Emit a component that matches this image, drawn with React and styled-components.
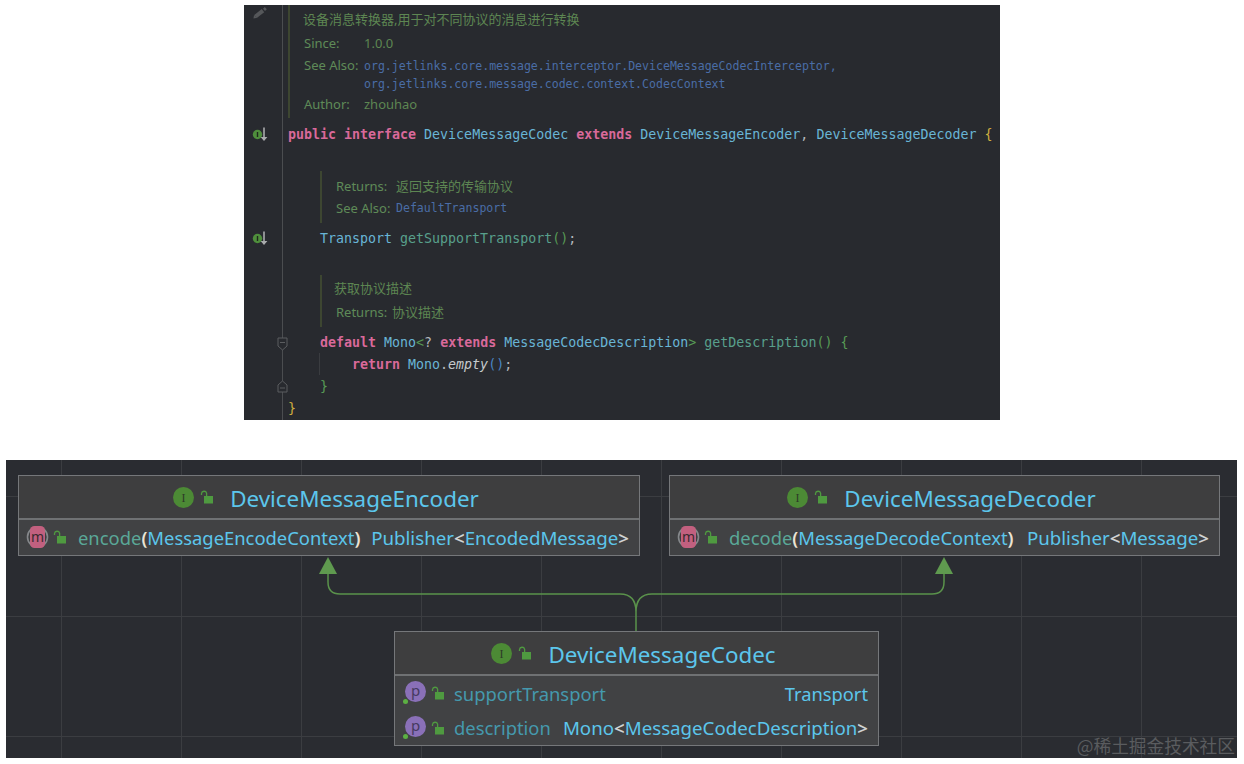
import React from "react";
import styled, { createGlobalStyle } from "styled-components";

const colors = {
  doc: "#5d8652",
  docLabel: "#5f8a58",
  link: "#4a6da6",
  keyword: "#d9699a",
  type: "#68b5d6",
  method: "#58a08c",
  bracket: "#579a55",
  plain: "#b4b8bc",
  brace: "#cfae3f",
  nodeType: "#5cc6ec",
};

const GlobalStyle = createGlobalStyle`
  html, body { margin: 0; padding: 0; background: #ffffff; }
  body { font-family: "Noto Sans", "Noto Sans CJK SC", sans-serif; }
`;

const Page = styled.div`
  display: flex;
  flex-direction: column;
  align-items: flex-start;
  width: 1244px;
  height: 764px;
  overflow: hidden;
`;

/* ---- editor ---- */

const Editor = styled.div`
  display: flex;
  flex-direction: column;
  width: 756px;
  height: 415px;
  margin: 5px 0 0 244px;
  background: #282a2f linear-gradient(#4b4d50, #4b4d50) 38px 0 / 1px 100% no-repeat;
`;

const Row = styled.div`
  display: grid;
  grid-template-columns: 39px 1fr;
  margin-top: ${(p) => p.$gap || 0}px;
`;

const Gutter = styled.div`
  position: relative;
  display: flex;
  align-items: ${(p) => (p.$top ? "flex-start" : "center")};
  padding-left: ${(p) => (p.$top ? 9 : 8)}px;
  padding-top: ${(p) => (p.$top ? 2 : 0)}px;
`;

const FoldMark = styled.svg`
  position: absolute;
  left: 33px;
  top: ${(p) => (p.$end ? 5 : 6)}px;
`;

const DocBlock = styled.div`
  height: ${(p) => p.$h}px;
  box-sizing: border-box;
  margin-left: ${(p) => p.$indent}px;
  padding-top: ${(p) => p.$pad}px;
  padding-left: 14px;
  border-left: 2px solid #3d4631;
  font-size: 13px;
  color: ${colors.doc};
`;

const DocTitle = styled.div`
  height: 22px;
  line-height: 22px;
  margin-left: ${(p) => p.$shift || 0}px;
  margin-bottom: ${(p) => p.$after || 0}px;
  white-space: nowrap;
`;

const DocRow = styled.div`
  display: grid;
  grid-template-columns: ${(p) => p.$col}px 1fr;
  line-height: 22px;
  margin-bottom: ${(p) => p.$after || 0}px;
  white-space: nowrap;
`;

const DocLabel = styled.span`
  color: ${colors.docLabel};
`;

const DocLink = styled.div`
  font-family: "DejaVu Sans Mono", monospace;
  font-size: 11.55px;
  line-height: 18px;
  padding-top: ${(p) => p.$top}px;
  color: ${colors.link};
`;

const Code = styled.div`
  position: relative;
  height: 22px;
  line-height: 24px;
  padding-left: ${(p) => p.$left}px;
  font-family: "DejaVu Sans Mono", monospace;
  font-size: 13.3px;
  white-space: pre;
  color: ${colors.plain};
`;

const IndentGuide = styled.i`
  position: absolute;
  left: 36px;
  top: 0;
  bottom: 0;
  width: 1px;
  background: #3a3c40;
`;

const Tok = styled.span`
  color: ${(p) => p.$c};
  font-weight: ${(p) => (p.$bold ? 700 : 400)};
  font-style: ${(p) => (p.$italic ? "italic" : "normal")};
`;

const Pencil = () => (
  <svg width="14" height="12" viewBox="0 0 14 12">
    <path d="M2.5 9.5 L10 3.6" stroke="#55575a" strokeWidth="4" />
    <path d="M0.5 11.5 L1 8 L4 10.8 z" fill="#55575a" />
    <path d="M11 2.8 L12.8 1.2" stroke="#55575a" strokeWidth="3" />
  </svg>
);

const ImplMark = () => (
  <svg width="17" height="15" viewBox="0 0 17 15">
    <circle cx="5.5" cy="7.5" r="4.7" fill="#4f8f3c" />
    <rect x="4.8" y="5" width="1.4" height="5" fill="#1f2a1c" />
    <path d="M12 0.5 V11" stroke="#a9abad" strokeWidth="1.6" />
    <path d="M8.6 10 h6.8 L12 14 z" fill="#a9abad" />
  </svg>
);

const Fold = ({ end }) => (
  <FoldMark $end={end} width="11" height="14" viewBox="0 0 11 14">
    <path
      d={end ? "M1 12 V5 L5.5 1 L10 5 V12 z" : "M1 1 V9 L5.5 13 L10 9 V1 z"}
      fill="#282a2f"
      stroke="#5b5d60"
    />
    <path d={end ? "M3 8 H8" : "M3 5.5 H8"} stroke="#5b5d60" />
  </FoldMark>
);

const EditorPane = () => (
  <Editor>
    <Row>
      <Gutter $top>
        <Pencil />
      </Gutter>
      <DocBlock $h={113} $indent={5} $pad={3}>
        <DocTitle $shift={-1} $after={2}>设备消息转换器,用于对不同协议的消息进行转换</DocTitle>
        <DocRow $col={60}>
          <DocLabel>Since:</DocLabel>
          <span>1.0.0</span>
        </DocRow>
        <DocRow $col={60}>
          <DocLabel>See Also:</DocLabel>
          <DocLink $top={3}>
            org.jetlinks.core.message.interceptor.DeviceMessageCodecInterceptor,
            <br />
            org.jetlinks.core.message.codec.context.CodecContext
          </DocLink>
        </DocRow>
        <DocRow $col={60}>
          <DocLabel>Author:</DocLabel>
          <span>zhouhao</span>
        </DocRow>
      </DocBlock>
    </Row>
    <Row $gap={5}>
      <Gutter>
        <ImplMark />
      </Gutter>
      <Code $left={5}>
        <Tok $c={colors.keyword} $bold>public interface </Tok>
        <Tok $c={colors.type}>DeviceMessageCodec </Tok>
        <Tok $c={colors.keyword} $bold>extends </Tok>
        <Tok $c={colors.type}>DeviceMessageEncoder</Tok>, <Tok $c={colors.type}>DeviceMessageDecoder </Tok>
        <Tok $c={colors.brace}>{"{"}</Tok>
      </Code>
    </Row>
    <Row $gap={26}>
      <Gutter />
      <DocBlock $h={52} $indent={37} $pad={4}>
        <DocRow $col={60}>
          <DocLabel>Returns:</DocLabel>
          <span>返回支持的传输协议</span>
        </DocRow>
        <DocRow $col={60}>
          <DocLabel>See Also:</DocLabel>
          <DocLink $top={2}>DefaultTransport</DocLink>
        </DocRow>
      </DocBlock>
    </Row>
    <Row $gap={4}>
      <Gutter>
        <ImplMark />
      </Gutter>
      <Code $left={37}>
        <Tok $c={colors.type}>Transport </Tok>
        <Tok $c={colors.method}>getSupportTransport</Tok>
        <Tok $c={colors.bracket}>()</Tok>;
      </Code>
    </Row>
    <Row $gap={26}>
      <Gutter />
      <DocBlock $h={52} $indent={37} $pad={2}>
        <DocTitle $shift={-2} $after={2}>获取协议描述</DocTitle>
        <DocRow $col={56}>
          <DocLabel>Returns:</DocLabel>
          <span>协议描述</span>
        </DocRow>
      </DocBlock>
    </Row>
    <Row $gap={4}>
      <Gutter>
        <Fold />
      </Gutter>
      <Code $left={37}>
        <Tok $c={colors.keyword} $bold>default </Tok>
        <Tok $c={colors.type}>Mono</Tok>
        <Tok $c={colors.bracket}>{"<"}</Tok>?{" "}
        <Tok $c={colors.keyword} $bold>extends </Tok>
        <Tok $c={colors.type}>MessageCodecDescription</Tok>
        <Tok $c={colors.bracket}>{"> "}</Tok>
        <Tok $c={colors.method}>getDescription</Tok>
        <Tok $c={colors.bracket}>{"() {"}</Tok>
      </Code>
    </Row>
    <Row>
      <Gutter />
      <Code $left={69}>
        <IndentGuide />
        <Tok $c={colors.keyword} $bold>return </Tok>
        <Tok $c={colors.type}>Mono</Tok>.<Tok $c="#c6cacd" $italic>empty</Tok>
        <Tok $c="#4a86c4">()</Tok>;
      </Code>
    </Row>
    <Row>
      <Gutter>
        <Fold end />
      </Gutter>
      <Code $left={37}>
        <Tok $c={colors.bracket}>{"}"}</Tok>
      </Code>
    </Row>
    <Row>
      <Gutter />
      <Code $left={5}>
        <Tok $c={colors.brace}>{"}"}</Tok>
      </Code>
    </Row>
  </Editor>
);

/* ---- diagram ---- */

const Diagram = styled.div`
  position: relative;
  width: 1231px;
  height: 298px;
  margin: 40px 0 0 6px;
  background-color: #2a2c31;
  background-image: linear-gradient(to right, #3b3d41 1px, transparent 1px),
    linear-gradient(to bottom, #3b3d41 1px, transparent 1px);
  background-size: 120px 120px;
  background-position: 55px 36px;
`;

const Edges = styled.svg`
  position: absolute;
  left: 0;
  top: 0;
`;

const Node = styled.div`
  position: absolute;
  left: ${(p) => p.$x}px;
  top: ${(p) => p.$y}px;
  width: ${(p) => p.$w}px;
  box-sizing: border-box;
  border: 1px solid #75777a;
  background: #414244;
`;

const NodeHeader = styled.div`
  display: flex;
  align-items: center;
  justify-content: center;
  gap: 6px;
  height: 42px;
  padding-right: 6px;
  border-bottom: 2px solid #6f7173;
  background: #3e3e3f;
`;

const NodeTitle = styled.span`
  margin-left: 10px;
  padding-top: 2px;
  font-size: 22.4px;
  color: ${colors.nodeType};
`;

const MemberList = styled.div`
  display: flex;
  flex-direction: column;
`;

const Member = styled.div`
  box-sizing: border-box;
  display: flex;
  align-items: center;
  height: ${(p) => p.$h}px;
  padding: 0 10px ${(p) => p.$lift || 0}px 8px;
  font-size: 18.4px;
  white-space: nowrap;
`;

const MemberIcons = styled.div`
  display: flex;
  align-items: center;
  gap: 5px;
  margin-right: ${(p) => p.$after}px;
`;

const MemberName = styled.span`
  color: ${(p) => p.$c};
`;

const MemberType = styled.span`
  margin-left: auto;
  font-size: ${(p) => p.$size || 18.7}px;
  color: ${colors.nodeType};
`;

const Paren = styled.span`
  color: #ece4d4;
  font-weight: 600;
`;

const Angle = styled.span`
  color: #d0d2d3;
  font-weight: 600;
`;

const Type = styled.span`
  color: ${colors.nodeType};
`;

const Watermark = styled.div`
  position: absolute;
  right: 2px;
  bottom: 3px;
  font-family: "Noto Sans CJK SC", sans-serif;
  font-size: 17.7px;
  line-height: 20px;
  color: #5a5c5f;
`;

const IconSvg = styled.svg`
  overflow: visible;
`;

const IconText = styled.text`
  font-family: "Noto Sans", sans-serif;
  text-anchor: middle;
`;

const Lock = () => (
  <svg width="14" height="14" viewBox="0 0 14 14">
    <path d="M1.5 5 V3.5 A2.6 2.6 0 0 1 6.6 3.2 V6" fill="none" stroke="#4f9a40" strokeWidth="1.3" />
    <rect x="4" y="6" width="9" height="7.5" fill="#4f9a40" />
  </svg>
);

const InterfaceIcon = () => (
  <IconSvg width="21" height="21" viewBox="0 0 21 21">
    <circle cx="10.5" cy="10.5" r="10.5" fill="#4c8a35" />
    <IconText x="10.5" y="15" fontSize="12" fill="#2c3a28" style={{ fontFamily: "Liberation Serif" }}>I</IconText>
  </IconSvg>
);

const MethodIcon = () => (
  <IconSvg width="21" height="22" viewBox="0 0 21 22">
    <circle cx="10.5" cy="11" r="10" fill="#3e3f41" stroke="#85888b" strokeWidth="1.6" />
    <rect x="3" y="0" width="15" height="22" rx="4.5" fill="#c2607f" />
    <IconText x="10.5" y="15.5" fontSize="14" fill="#3a2a30">m</IconText>
  </IconSvg>
);

const PropertyIcon = () => (
  <IconSvg width="23" height="24" viewBox="0 0 23 24">
    <circle cx="12.5" cy="10.5" r="10.5" fill="#8a70b8" />
    <IconText x="12.5" y="14.5" fontSize="15" fill="#453a60">p</IconText>
    <circle cx="2.5" cy="20.5" r="2.5" fill="#5cb043" />
  </IconSvg>
);

const Arrow = ({ x }) => <path d={`M${x} 97 L${x - 9} 114 H${x + 9} z`} fill="#5f9a4f" />;

const DiagramPane = () => (
  <Diagram>
    <Edges width="1231" height="298" viewBox="0 0 1231 298">
      <path
        d="M322 114 V122 Q322 134 334 134 H614 Q630 134 630 152 V172 M630 172 V152 Q630 134 646 134 H926 Q938 134 938 122 V114"
        fill="none"
        stroke="#5a924b"
        strokeWidth="1.5"
      />
      <Arrow x={322} />
      <Arrow x={938} />
    </Edges>

    <Node $x={12} $y={15} $w={622}>
      <NodeHeader>
        <InterfaceIcon />
        <Lock />
        <NodeTitle>DeviceMessageEncoder</NodeTitle>
      </NodeHeader>
      <MemberList>
        <Member $h={35} $lift={1}>
          <MemberIcons $after={11}>
            <MethodIcon />
            <Lock />
          </MemberIcons>
          <MemberName $c="#5aa898">encode</MemberName>
          <Paren>(</Paren>
          <Type>MessageEncodeContext</Type>
          <Paren>)</Paren>
          <MemberType>
            Publisher<Angle>{"<"}</Angle>EncodedMessage<Angle>{">"}</Angle>
          </MemberType>
        </Member>
      </MemberList>
    </Node>

    <Node $x={663} $y={15} $w={551}>
      <NodeHeader>
        <InterfaceIcon />
        <Lock />
        <NodeTitle>DeviceMessageDecoder</NodeTitle>
      </NodeHeader>
      <MemberList>
        <Member $h={35} $lift={1}>
          <MemberIcons $after={11}>
            <MethodIcon />
            <Lock />
          </MemberIcons>
          <MemberName $c="#5aa898">decode</MemberName>
          <Paren>(</Paren>
          <Type>MessageDecodeContext</Type>
          <Paren>)</Paren>
          <MemberType>
            Publisher<Angle>{"<"}</Angle>Message<Angle>{">"}</Angle>
          </MemberType>
        </Member>
      </MemberList>
    </Node>

    <Node $x={388} $y={171} $w={485}>
      <NodeHeader>
        <InterfaceIcon />
        <Lock />
        <NodeTitle>DeviceMessageCodec</NodeTitle>
      </NodeHeader>
      <MemberList>
        <Member $h={34}>
          <MemberIcons $after={9}>
            <PropertyIcon />
            <Lock />
          </MemberIcons>
          <MemberName $c="#4599ad">supportTransport</MemberName>
          <MemberType $size={18.3}>Transport</MemberType>
        </Member>
        <Member $h={35}>
          <MemberIcons $after={9}>
            <PropertyIcon />
            <Lock />
          </MemberIcons>
          <MemberName $c="#4599ad">description</MemberName>
          <MemberType>
            Mono<Angle>{"<"}</Angle>MessageCodecDescription<Angle>{">"}</Angle>
          </MemberType>
        </Member>
      </MemberList>
    </Node>

    <Watermark>@稀土掘金技术社区</Watermark>
  </Diagram>
);

export default function App() {
  return (
    <Page>
      <GlobalStyle />
      <EditorPane />
      <DiagramPane />
    </Page>
  );
}
